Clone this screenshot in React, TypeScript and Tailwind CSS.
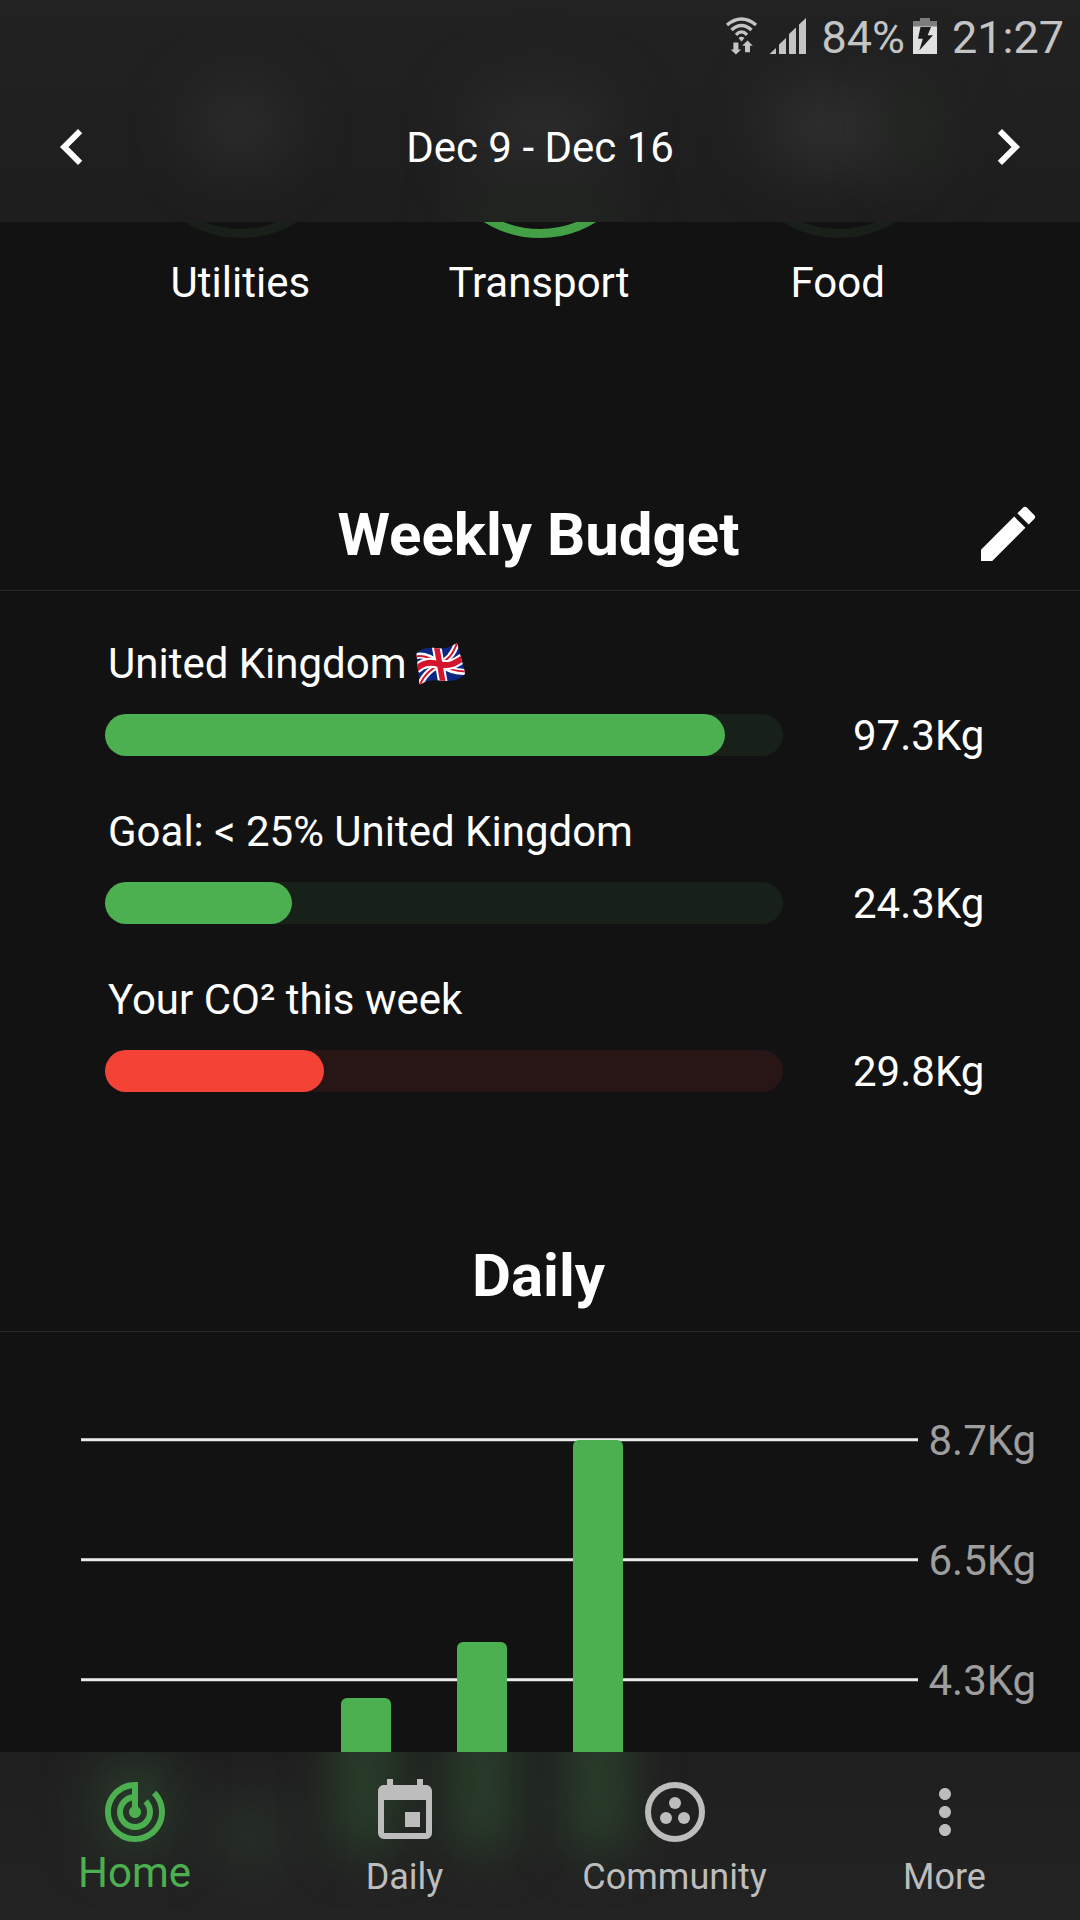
import React from 'react';
import { MdNavigateBefore, MdNavigateNext, MdEdit, MdTrackChanges, MdEvent, MdMoreVert } from 'react-icons/md';

const categories = [
  { label: 'Utilities', ring: 'border-[#182019]' },
  { label: 'Transport', ring: 'border-[#43a047]' },
  { label: 'Food', ring: 'border-[#182019]' },
];

const budgets = [
  { label: 'United Kingdom', flag: true, value: '97.3Kg', width: 620, fill: 'bg-[#4caf50]', track: 'bg-[#172019]' },
  { label: 'Goal: < 25% United Kingdom', flag: false, value: '24.3Kg', width: 187, fill: 'bg-[#4caf50]', track: 'bg-[#172019]' },
  { label: 'Your CO² this week', flag: false, value: '29.8Kg', width: 219, fill: 'bg-[#f44336]', track: 'bg-[#281616]' },
];

const gridLines = ['8.7Kg', '6.5Kg', '4.3Kg'];

// Heights run down to the bottom edge of the screen
const bars = [160, 110, 222.4, 278, 480];

const GroupIcon = ({ className }: { className?: string }) => (
  <svg className={className} viewBox="0 0 24 24" fill="currentColor">
    <circle cx="12" cy="12" r="9" fill="none" stroke="currentColor" strokeWidth="2" />
    <circle cx="12" cy="9" r="2" />
    <circle cx="9" cy="14" r="2" />
    <circle cx="15" cy="14" r="2" />
  </svg>
);

const tabs = [
  { label: 'Home', icon: MdTrackChanges, active: true },
  { label: 'Daily', icon: MdEvent, active: false },
  { label: 'Community', icon: GroupIcon, active: false },
  { label: 'More', icon: MdMoreVert, active: false },
];

const WifiIcon = () => (
  <svg className="w-[34px] h-[41px]" viewBox="0 0 34 41" fill="none" stroke="#c4c4c4">
    <path d="M2 8Q16.500 -4 31 8" strokeWidth="3.500" />
    <path d="M6.500 13Q16.500 4 26.500 13" strokeWidth="3.500" />
    <path d="M11 17.800Q16.500 12 22 17.800" strokeWidth="3.400" />
    <path d="M13.500 21Q16.500 18.600 19.500 21L16.500 24.600z" fill="#c4c4c4" stroke="none" />
    <path d="M8.400 25.600h5v6.800h2.800l-5.300 5.200-5.300-5.200h2.800z" fill="#c4c4c4" stroke="none" />
    <path d="M20 35.200h5v-6.400h2.800L22.500 23.600l-5.300 5.200H20z" fill="#c4c4c4" stroke="none" />
  </svg>
);

const SignalIcon = () => (
  <svg className="w-[38px] h-[41px]" viewBox="0 0 38 41" fill="#c4c4c4">
    <path d="M.5 37L7 31v6z" />
    <path d="M10 27.500L17 21v16h-7z" />
    <path d="M20 17L27 10.500V37h-7z" />
    <path d="M30 7.500L37 1v36h-7z" />
  </svg>
);

const BatteryIcon = () => (
  <svg className="w-[24px] h-[41px]" viewBox="0 0 24 41">
    <path d="M7 1h10v3h7v6H0V4h7z" fill="#7d7d7d" />
    <path d="M0 9.500h24V37H0z" fill="#e0e0e0" />
    <path d="M7.500 10h10.500l-3.300 8.200h5.300L6.300 33.500l3.500-11.700H5z" fill="#1c1c1c" />
  </svg>
);

const UnionJack = () => (
  <svg className="w-[50px] h-[42px]" viewBox="0 0 50 42" fill="none">
    <clipPath id="flag">
      <path d="M.5 11Q.5 9.800 1.500 9C8 4.500 14 4.500 20 5.200C28 6 34 4.500 39.600.700Q41 0 41.500 1.600L49 29.600Q49.400 30.800 48.200 31.700C42 37.500 35 38.500 29 37.800C20 37 12 36.500 5 41Q3.500 42 3.300 40Z" />
    </clipPath>
    <g clipPath="url(#flag)">
      <path d="M0 0h50v42H0z" fill="#0c2782" />
      <path d="M0 13C8 11 16 15 24 21S40 29 50 29" stroke="#fff" strokeWidth="6" />
      <path d="M4 42C8 31 16 26 24 21S37 12 41 0" stroke="#fff" strokeWidth="6" />
      <path d="M0 13.500C8 11.500 16 15.500 24 21S40 28.500 50 28.500" stroke="#d5142e" strokeWidth="2" />
      <path d="M4 42C8 31 16 26 24 21S37 12 41 0" stroke="#d5142e" strokeWidth="2" />
      <path d="M0 26C8 18.500 15 19 24 21.300S38 21 47 15" stroke="#fff" strokeWidth="10" />
      <path d="M20.500 3L27 40" stroke="#fff" strokeWidth="9.500" />
      <path d="M0 26C8 18.500 15 19 24 21.300S38 21 47 15" stroke="#d5142e" strokeWidth="6" />
      <path d="M20.500 3L27 40" stroke="#d5142e" strokeWidth="5.500" />
    </g>
  </svg>
);

const Header = () => (
  <header className="absolute inset-x-0 top-0 h-[222px] overflow-hidden bg-linear-to-b from-[#222222] to-[#1e1e1e]">
    {/* Blurred content scrolling behind the bar */}
    <div className="absolute left-[192px] top-[88px] w-[96px] h-[76px] rounded-full bg-[#2d2d2d] blur-[30px]" />
    <div className="absolute left-[470px] top-[90px] w-[140px] h-[85px] rounded-full bg-[#2b2c2b] blur-[32px]" />
    <div className="absolute left-[450px] top-[190px] w-[180px] h-[50px] rounded-full bg-[#222622] blur-[24px]" />
    <div className="absolute left-[765px] top-[88px] w-[140px] h-[78px] rounded-full bg-[#2f2f2f] blur-[30px]" />
    <div className="absolute left-[890px] top-[70px] w-[60px] h-[110px] rounded-full bg-[#222622] blur-[26px]" />

    <div className="relative flex items-start justify-end h-[72px] pt-[17px] pr-[16px] text-[45px] leading-[41px] text-[#c4c4c4]">
      <WifiIcon />
      <div className="ml-[10px]">
        <SignalIcon />
      </div>
      <span className="ml-[14.5px]">84%</span>
      <div className="ml-[8px]">
        <BatteryIcon />
      </div>
      <span className="ml-[15px]">21:27</span>
    </div>

    <div className="relative flex items-center justify-between h-[150px] px-9">
      <button>
        <MdNavigateBefore className="size-[72px]" />
      </button>
      <h1 className="pt-[2px] text-[42px] leading-[50px]">Dec 9 - Dec 16</h1>
      <button>
        <MdNavigateNext className="size-[72px]" />
      </button>
    </div>
  </header>
);

const SectionHeader = ({ title, editable }: { title: string; editable?: boolean }) => (
  <div className="relative border-b border-[#272727] pb-[19px]">
    <h2 className="pt-px pr-[3px] text-center text-[60px] leading-[72px] font-bold">{title}</h2>
    {editable && (
      <button className="absolute right-9 top-0">
        <MdEdit className="size-[72px]" />
      </button>
    )}
  </div>
);

const TabBar = () => (
  <nav className="absolute inset-x-0 bottom-0 h-[168px] overflow-hidden bg-linear-to-b from-[#1f1f1f] to-[#232323]">
    <div className="absolute left-[100px] top-[8px] w-[70px] h-[90px] bg-[#293b2b] blur-[26px]" />
    <div className="absolute left-[215px] top-[50px] w-[70px] h-[65px] bg-[#27312a] blur-[26px]" />
    <div className="absolute left-[336px] -top-[40px] w-[60px] h-[138px] bg-[#2a412b] blur-[25px]" />
    <div className="absolute left-[452px] -top-[40px] w-[60px] h-[138px] bg-[#2a412b] blur-[25px]" />
    <div className="absolute left-[568px] -top-[40px] w-[60px] h-[138px] bg-[#2a412b] blur-[25px]" />

    <div className="relative grid grid-cols-4 h-full pt-6">
      {tabs.map(({ label, icon: Icon, active }) => (
        <button
          key={label}
          className={`flex flex-col items-center ${active ? 'text-[#4caf50]' : 'text-[#bdbdbd]'}`}
        >
          <Icon className="size-[72px]" />
          <span className={active ? 'pr-px text-[42px] leading-[49px]' : 'pr-px text-[36px] leading-[58px]'}>
            {label}
          </span>
        </button>
      ))}
    </div>
  </nav>
);

export default function App() {
  return (
    <div className="relative w-[1080px] h-[1920px] overflow-hidden bg-[#121212] font-['Roboto',sans-serif] text-white">
      <main>
        <section className="grid grid-cols-3 px-[92px] pt-[22px]">
          {categories.map((category) => (
            <div key={category.label} className="flex flex-col items-center gap-5">
              <div className={`size-[216px] rounded-full border-[9px] ${category.ring}`} />
              <span className="pr-[2px] text-[42px] leading-[50px]">{category.label}</span>
            </div>
          ))}
        </section>

        <section className="mt-[190px]">
          <SectionHeader title="Weekly Budget" editable />
          <div className="flex flex-col gap-[51px] pt-12 pl-[105px]">
            {budgets.map((budget) => (
              <div key={budget.label}>
                <div className="flex items-center gap-[9.5px] pl-[3px] text-[42px] leading-[50px]">
                  <span>{budget.label}</span>
                  {budget.flag && <UnionJack />}
                </div>
                <div className="mt-[25px] flex items-center h-[42px]">
                  <div className={`w-[678px] h-[42px] rounded-full ${budget.track}`}>
                    <div className={`h-full rounded-full ${budget.fill}`} style={{ width: budget.width }} />
                  </div>
                  <span className="ml-[70px] pt-[2px] text-[42px] leading-[44px]">{budget.value}</span>
                </div>
              </div>
            ))}
          </div>
        </section>

        <section className="mt-[147px]">
          <SectionHeader title="Daily" />
          <div className="relative h-[588px] pt-12">
            {gridLines.map((line) => (
              <div key={line} className="flex items-center h-[120px] pl-[81px]">
                <div className="w-[837px] h-1 border-t border-b border-t-[#bcbcbc] border-b-[#454545] bg-[#e9e9e9]" />
                <span className="ml-[10.5px] pt-[2px] text-[42px] leading-[52px] text-[#9e9e9e]">{line}</span>
              </div>
            ))}
            <div className="absolute left-[108px] bottom-0 flex items-end gap-[66.25px]">
              {bars.map((height, i) => (
                <div key={i} className="w-[50px] rounded-t-[6px] bg-[#4caf50]" style={{ height }} />
              ))}
            </div>
          </div>
        </section>
      </main>

      <Header />
      <TabBar />
    </div>
  );
}
